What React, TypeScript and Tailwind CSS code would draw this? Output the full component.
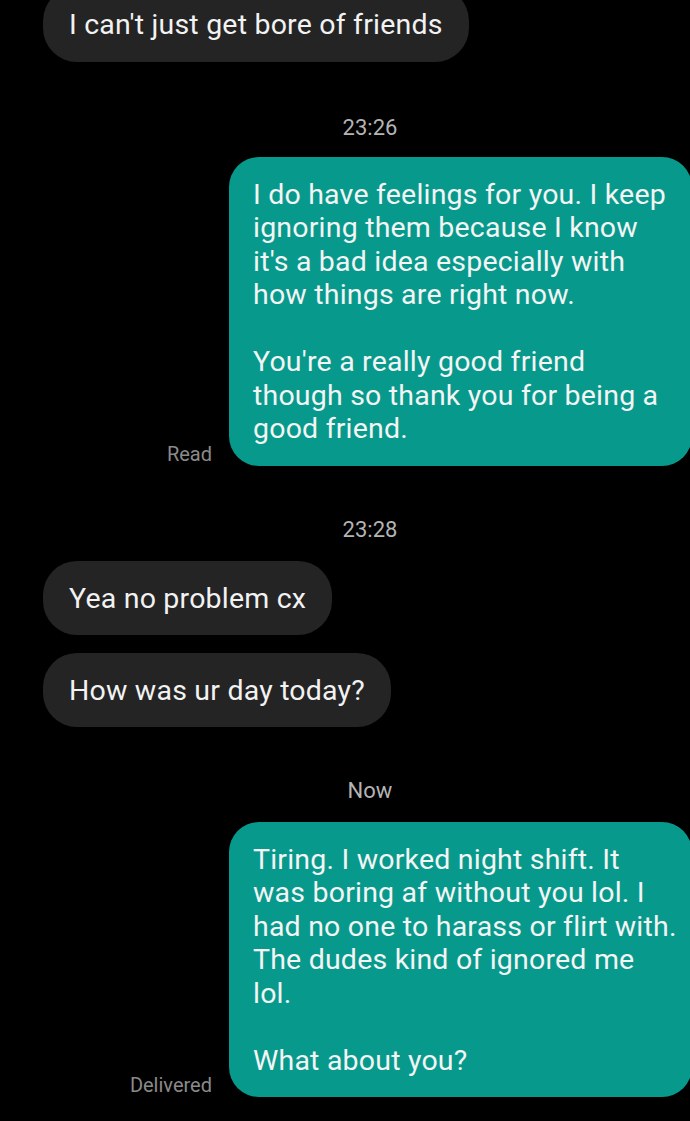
import React from "react";

const font = { fontFamily: "Roboto, 'Noto Sans', sans-serif" };

function Received({ text }: { text: string }) {
  return (
    <div className="flex justify-start pl-[43px]">
      <div className="rounded-[34px] bg-[#242424] pl-[26px] pr-[26px] pt-[21px] pb-[20px] text-[28.5px] tracking-[0.2px] leading-[33.5px] text-[#f2f2f2] whitespace-nowrap">
        {text}
      </div>
    </div>
  );
}

function Sent({ lines, label }: { lines: string[]; label: string }) {
  return (
    <div className="flex justify-end items-end gap-[17px] -mr-[2px]">
      <div className="text-[20px] leading-[24px] text-[#8a8a8a]">{label}</div>
      <div className="w-[463px] rounded-[30px] bg-[#079a8c] pl-[24px] pr-[10px] pt-[21px] pb-[20px] text-[28.5px] tracking-[0.2px] leading-[33.5px] text-[#f4f4f4] whitespace-nowrap">
        {lines.map((l, i) => (
          <div key={i} className="h-[33.5px]">
            {l}
          </div>
        ))}
      </div>
    </div>
  );
}

function Stamp({ text, className }: { text: string; className: string }) {
  return (
    <div className={"flex justify-center pl-[50px] text-[22px] leading-[26px] text-[#b4b4b4] " + className}>
      {text}
    </div>
  );
}

export default function App() {
  return (
    <div className="w-[690px] h-[1121px] bg-black overflow-hidden" style={font}>
      <div className="flex flex-col">
        <div className="-mt-[13px]">
          <Received text="I can't just get bore of friends" />
        </div>
        <Stamp text="23:26" className="mt-[53px]" />
        <div className="mt-[16px]">
          <Sent
            label="Read"
            lines={[
              "I do have feelings for you. I keep",
              "ignoring them because I know",
              "it's a bad idea especially with",
              "how things are right now.",
              "",
              "You're a really good friend",
              "though so thank you for being a",
              "good friend.",
            ]}
          />
        </div>
        <Stamp text="23:28" className="mt-[51px]" />
        <div className="mt-[18px]">
          <Received text="Yea no problem cx" />
        </div>
        <div className="mt-[17.5px]">
          <Received text="How was ur day today?" />
        </div>
        <Stamp text="Now" className="mt-[50.5px]" />
        <div className="mt-[18px]">
          <Sent
            label="Delivered"
            lines={[
              "Tiring. I worked night shift. It",
              "was boring af without you lol. I",
              "had no one to harass or flirt with.",
              "The dudes kind of ignored me",
              "lol.",
              "",
              "What about you?",
            ]}
          />
        </div>
      </div>
    </div>
  );
}
